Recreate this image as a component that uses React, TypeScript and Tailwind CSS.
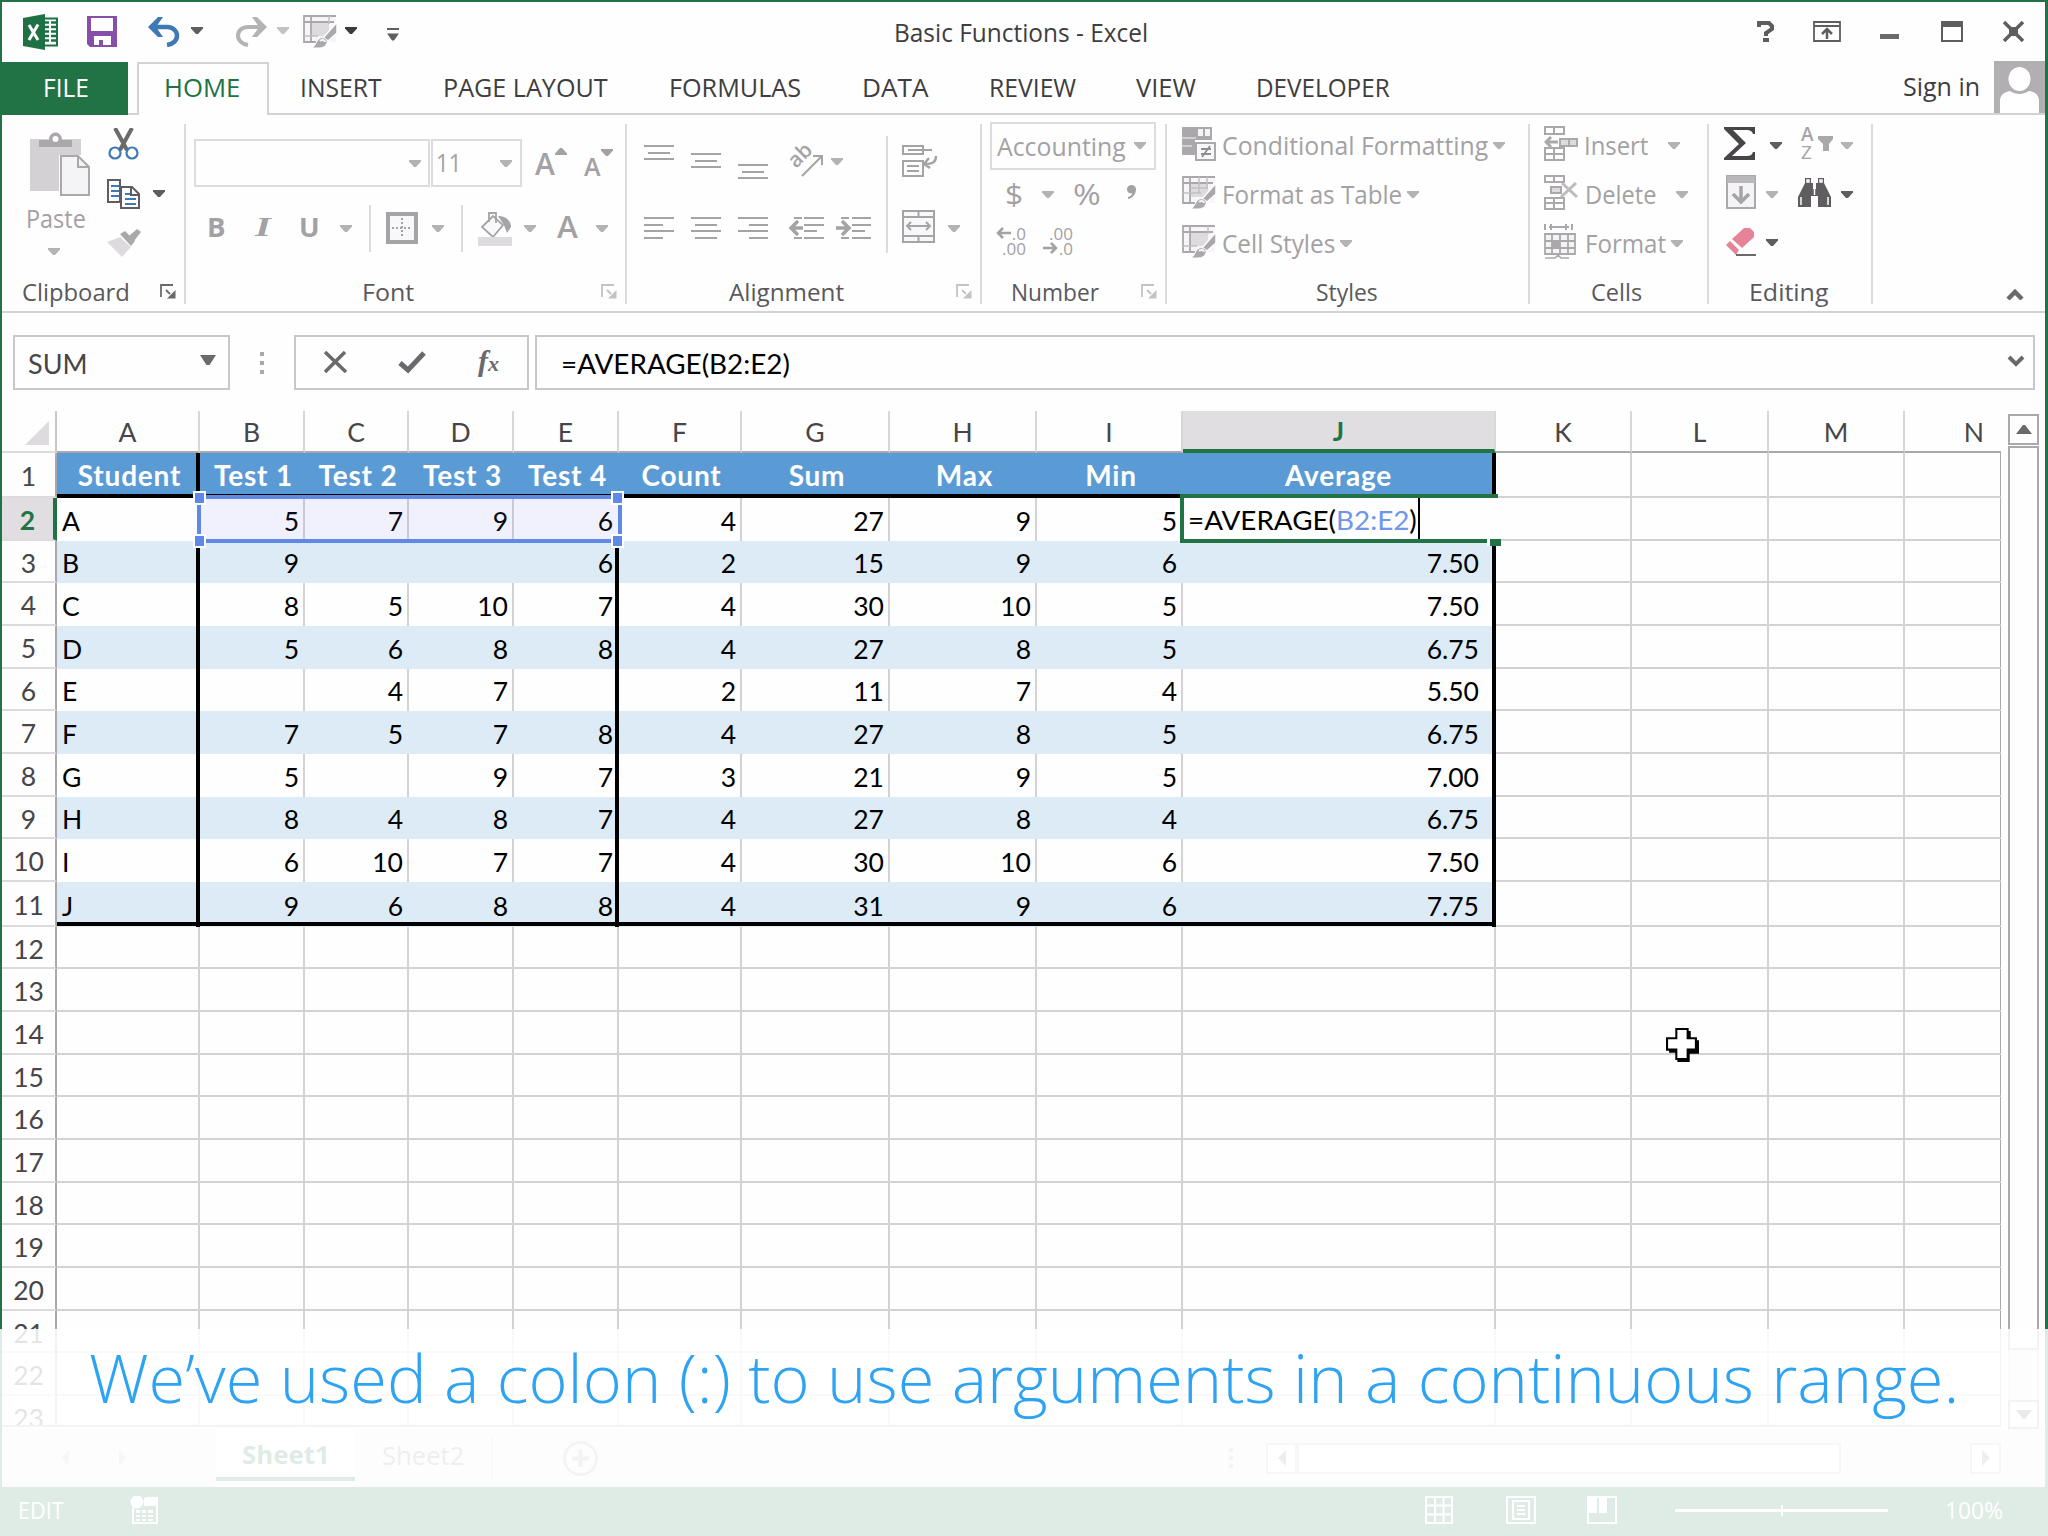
/**
 * Spreadsheet window - ribbon, formula bar, sheet grid and caption
 */

import React, { useLayoutEffect, useRef } from 'react';
import clsx from 'clsx';

/* ---------- small helpers ---------- */

interface FitProps {
  className?: string;
  children: React.ReactNode;
}

// One line of text, squeezed or stretched to the width given in className
const Fit: React.FC<FitProps> = ({ className, children }) => {
  const outer = useRef<HTMLDivElement>(null);
  const inner = useRef<HTMLSpanElement>(null);

  useLayoutEffect(() => {
    if (!outer.current || !inner.current) return;
    const ratio = outer.current.clientWidth / inner.current.offsetWidth;
    inner.current.style.transform = `scaleX(${ratio})`;
  }, []);

  return (
    <div className={clsx('shrink-0 whitespace-nowrap leading-none', className)}>
      <span ref={inner} className="inline-block origin-left">
        {children}
      </span>
      <div ref={outer} className="h-0 w-full" />
    </div>
  );
};

const Caret: React.FC<{ className?: string }> = ({ className }) => (
  <svg viewBox="0 0 12 7" className={clsx('w-[12px] h-[7px] shrink-0', className)}>
    <path d="M0 0h12v1.5L7 7H5L0 1.5z" fill="currentColor" />
  </svg>
);

const Launcher: React.FC<{ className?: string }> = ({ className }) => (
  <svg viewBox="0 0 16 15" className={clsx('w-[16px] h-[15px] shrink-0', className)}>
    <path d="M1 13V1h12M6 6l4 4" fill="none" stroke="currentColor" strokeWidth="1.8" />
    <path d="M15.500 6v8.500H7z" fill="currentColor" />
  </svg>
);

const Sep: React.FC<{ className?: string }> = ({ className }) => (
  <div className={clsx('w-[2px] shrink-0 bg-[#dcdadd]', className)} />
);

const dark = 'text-[#5f5d60]';
const dim = 'text-[#b4b2b5]';

/* ---------- title bar ---------- */

const GridBrush: React.FC<{ className?: string; variant?: 'table' | 'cell' }> = ({
  className,
  variant = 'cell',
}) => (
  <svg viewBox="0 0 34 34" className={clsx('w-[34px] h-[34px] shrink-0', className)}>
    <rect x="1" y="1" width="32" height="26" fill="#f6f5f7" />
    <rect x="8" y="8" width="18" height="13" fill="#dddbde" />
    <path d="M33 1H1v26h12M1 7h30M8 1v25" fill="none" stroke="#aaa8ab" strokeWidth="1.8" />
    {variant === 'table' && (
      <path d="M1 17h18M17 1v16M25 1v11M8 12h18" fill="none" stroke="#c2c0c3" strokeWidth="1.500" />
    )}
    {variant === 'cell' && <path d="M1 21h14M26 1v8" fill="none" stroke="#c2c0c3" strokeWidth="1.500" />}
    <path d="M34 7v11l-9 8-5-3z" fill="#aaa8ab" stroke="#fefefe" strokeWidth="1.500" />
    <path d="M9 33c4-2 4-8 8-10 4-1 8 1 7 5-1 3-4 5-8 5z" fill="#aaa8ab" stroke="#fefefe" strokeWidth="1" />
    <path d="M17 26c2-2 5-1 5 1" fill="none" stroke="#f4f3f5" strokeWidth="2" />
  </svg>
);

const TitleBar: React.FC = () => (
  <div className="flex h-[60px] items-center text-[#5f5d60]">
    <svg viewBox="0 0 36 36" className="ml-[21px] w-[36px] h-[36px]">
      <rect x="19" y="4.500" width="15" height="27" fill="#fff" stroke="#1e7145" strokeWidth="2" />
      <path
        d="M22 8.500h4M28 8.500h5M22 13h4M28 13h5M22 17.500h4M28 17.500h5M22 22h4M28 22h5M22 26.500h4M28 26.500h5"
        stroke="#1e7145"
        strokeWidth="2.500"
      />
      <path d="M0 4l22-4v36L0 32z" fill="#1e7145" />
      <path d="M6 11l9 15M15 10.500L6 26" stroke="#fff" strokeWidth="3" />
    </svg>
    <svg viewBox="0 0 30 31" className="ml-[28px] w-[30px] h-[31px]">
      <path d="M0 0h30v31H3l-3-3z" fill="#864fa8" />
      <path d="M4 2h22v13H4zM7 20h17v9h-8v-5h-4v5H7z" fill="#fff" />
    </svg>
    <svg viewBox="0 0 32 30" className="ml-[31px] w-[32px] h-[30px]">
      <path d="M3 10h16c6 0 10 4 10 8.500 0 5-4 8.500-10 9.500" fill="none" stroke="#3e78b5" strokeWidth="4.500" />
      <path d="M0 10L10 0h5L8 10l7 10h-5z" fill="#3e78b5" />
    </svg>
    <Caret className="ml-[11px] mb-[2px] w-[11px]" />
    <svg viewBox="0 0 32 30" className="ml-[32px] w-[32px] h-[30px]">
      <path d="M29 10H13C7 10 3 14 3 18.500c0 5 4 8.500 10 9.500" fill="none" stroke="#b4b2b5" strokeWidth="4" />
      <path d="M32 10L22 0h-5l7 10-7 10h5z" fill="#b4b2b5" />
    </svg>
    <Caret className="mb-[2px] ml-[10px] text-[#c4c2c5]" />
    <GridBrush className="ml-[14px]" />
    <Caret className="mb-[2px] ml-[8px] text-[#3c3a3d]" />
    <svg viewBox="0 0 12 13" className="ml-[30px] mt-[5px] w-[12px] h-[13px]">
      <path d="M0 1h12" stroke="currentColor" strokeWidth="2" />
      <path d="M0 5.500h12L7 12.500H5z" fill="currentColor" />
    </svg>
    <Fit className="ml-[495px] mt-[1px] w-[254px] text-[25px] text-[#3f3d40]">Basic Functions - Excel</Fit>
    <svg viewBox="0 0 17 21" className="ml-[609px] w-[17px] h-[21px]">
      <path d="M2 6V2h10l3 3v3l-6 4v3" fill="none" stroke="currentColor" strokeWidth="4" />
      <path d="M6 17h6v4H6z" fill="currentColor" />
    </svg>
    <svg viewBox="0 0 28 21" className="ml-[39px] w-[28px] h-[21px]">
      <path d="M1 1h26v19H1zM1 5h26" fill="none" stroke="currentColor" strokeWidth="1.800" />
      <path d="M14 18V9M9 13l5-5 5 5" fill="none" stroke="currentColor" strokeWidth="2.500" />
    </svg>
    <div className="ml-[39px] mt-[9px] h-[5px] w-[19px] bg-[#6b696c]" />
    <svg viewBox="0 0 22 21" className="ml-[42px] w-[22px] h-[21px]">
      <path d="M1 1h20v19H1z" fill="none" stroke="currentColor" strokeWidth="2" />
      <path d="M1 1h20v5H1z" fill="currentColor" />
    </svg>
    <svg viewBox="0 0 21 21" className="ml-[40px] w-[21px] h-[21px]">
      <path d="M1 1l19 19M20 1L1 20" stroke="currentColor" strokeWidth="3.500" />
      <path d="M6 6h9v9H6z" fill="currentColor" />
    </svg>
  </div>
);

/* ---------- tabs ---------- */

const Tabs: React.FC = () => (
  <div className="flex h-[53px] items-center border-b-2 border-[#d4d2d5] text-[25px] text-[#3f3d40]">
    <div className="mb-[-2px] flex h-[53px] w-[126px] items-center bg-[#217346] pb-[2px] pl-[41px] text-white">
      <Fit className="w-[46px]">FILE</Fit>
    </div>
    <div className="mb-[-2px] ml-[9px] flex h-[53px] w-[132px] items-center border-x-2 border-t-2 border-[#d4d2d5] bg-[#fefefe] pb-[4px] pl-[25px] text-[#217346]">
      <Fit className="w-[76px]">HOME</Fit>
    </div>
    <Fit className="ml-[31px] w-[82px]">INSERT</Fit>
    <Fit className="ml-[61px] w-[165px]">PAGE LAYOUT</Fit>
    <Fit className="ml-[61px] w-[132px]">FORMULAS</Fit>
    <Fit className="ml-[61px] w-[67px]">DATA</Fit>
    <Fit className="ml-[60px] w-[87px]">REVIEW</Fit>
    <Fit className="ml-[60px] w-[60px]">VIEW</Fit>
    <Fit className="ml-[60px] w-[134px]">DEVELOPER</Fit>
    <Fit className="ml-[513px] mb-[2px] w-[77px]">Sign in</Fit>
    <svg viewBox="0 0 51 52" className="ml-auto w-[51px] h-[52px]">
      <rect width="51" height="52" fill="#b1afb2" />
      <path d="M6 52V40c0-6 4-9 10-10 6 4 13 4 19 0 6 1 10 4 10 10v12z" fill="#fff" />
      <ellipse cx="25.500" cy="18" rx="11" ry="12" fill="#fff" />
    </svg>
  </div>
);

/* ---------- ribbon ---------- */

interface GroupProps {
  label: string;
  labelClass: string;
  launcherClass?: string;
  className: string;
  children: React.ReactNode;
}

const Group: React.FC<GroupProps> = ({ label, labelClass, launcherClass, className, children }) => (
  <div className={clsx('flex h-[180px] shrink-0 flex-col border-r-2 border-[#dcdadd]', className)}>
    <div className="h-[157px]">{children}</div>
    <div className="flex items-start text-[24px] text-[#5a585b]">
      <Fit className={clsx('mt-[4px]', labelClass)}>{label}</Fit>
      {launcherClass && <Launcher className={clsx('mt-[8px]', launcherClass)} />}
    </div>
  </div>
);

const Clipboard: React.FC = () => (
  <Group label="Clipboard" labelClass="ml-[20px] w-[108px]" launcherClass="ml-[30px] text-[#6b696c]" className="w-[184px]">
    <div className="flex">
      <div className="ml-[25px] mt-[8px] flex w-[64px] flex-col">
        <svg viewBox="0 0 60 64" className="ml-[3px] w-[60px] h-[64px]">
          <path d="M0 7h51v16H29v36H0z" fill="#d3d1d4" />
          <path d="M9 15V8h10c0-10 13-10 13 0h10v7z" fill="#aaa8ab" />
          <circle cx="25.500" cy="7" r="3" fill="#fff" />
          <path d="M31 24h17l11 11v28H31z" fill="#f4f3f6" stroke="#aaa8ab" strokeWidth="2" />
          <path d="M48 24v11h11" fill="none" stroke="#aaa8ab" strokeWidth="2" />
        </svg>
        <Fit className="ml-[-1px] mt-[10px] w-[60px] text-[25px] text-[#a3a1a4]">Paste</Fit>
        <Caret className={clsx('ml-[21px] mt-[17px]', dim)} />
      </div>
      <div className="ml-[16px] mt-[4px] flex flex-col">
        <svg viewBox="0 0 32 32" className="ml-[1px] w-[32px] h-[32px]">
          <path d="M7 0l12 22M24 0L12 22" stroke="#6b696c" strokeWidth="4" />
          <circle cx="7" cy="25" r="5.500" fill="none" stroke="#3e78b5" strokeWidth="2.200" />
          <circle cx="24" cy="25" r="5.500" fill="none" stroke="#3e78b5" strokeWidth="2.200" />
        </svg>
        <div className="mt-[19px] flex items-center">
          <svg viewBox="0 0 33 30" className="w-[33px] h-[30px]">
            <path d="M1 1h12v22H1z" fill="#fff" stroke="#5f5d60" strokeWidth="2" />
            <path d="M4 7h8M4 12h8M4 17h8" stroke="#3e78b5" strokeWidth="2" />
            <path d="M14 8h11l7 7v14H14z" fill="#fff" stroke="#5f5d60" strokeWidth="2" />
            <path d="M24 8v8h8" fill="none" stroke="#5f5d60" strokeWidth="2" />
            <path d="M18 15h5M18 20h11M18 25h11" stroke="#3e78b5" strokeWidth="2" />
          </svg>
          <Caret className={clsx('ml-[13px]', dark)} />
        </div>
        <svg viewBox="0 0 34 29" className="mt-[19px] w-[34px] h-[29px]">
          <path d="M0 14l13-5 11 10-9 10z" fill="#dddbde" />
          <path d="M13 6l5-3 10 10-4 5z" fill="#aaa8ab" />
          <path d="M22 8l8-7 4 3-7 9z" fill="#aaa8ab" />
        </svg>
      </div>
    </div>
  </Group>
);

const Font: React.FC = () => (
  <Group label="Font" labelClass="ml-[176px] w-[52px]" launcherClass="ml-[187px] text-[#c4c2c5]" className="w-[441px]">
    <div className={clsx('flex h-[78px] items-center pt-[1px]', dim)}>
      <div className="ml-[8px] flex h-[48px] w-[236px] items-center justify-end border-2 border-[#dddbde] pr-[7px]">
        <Caret />
      </div>
      <div className="ml-[1px] flex h-[48px] w-[91px] items-center border-2 border-[#dddbde]">
        <Fit className="mb-[2px] ml-[3px] w-[26px] text-[25px] text-[#a3a1a4]">11</Fit>
        <Caret className="ml-[38px]" />
      </div>
      <div className="ml-[13px] flex text-[#a3a1a4]">
        <Fit className="mt-[2px] w-[20px] text-[30px] font-semibold">A</Fit>
        <Caret className="mt-[1px] rotate-180 w-[10px]" />
      </div>
      <div className="ml-[17px] flex text-[#a3a1a4]">
        <Fit className="mt-[6px] w-[17px] text-[25px] font-semibold">A</Fit>
        <Caret className="mt-[1px] w-[10px]" />
      </div>
    </div>
    <div className={clsx('flex h-[54px] items-center', dim)}>
      <Fit className="mb-[4px] ml-[21px] w-[18px] text-[26px] font-bold text-[#a3a1a4]">B</Fit>
      <Fit className="mb-[4px] ml-[30px] w-[16px] font-['Liberation_Serif'] text-[28px] font-bold italic text-[#a3a1a4]">I</Fit>
      <Fit className="mb-[4px] ml-[28px] w-[21px] text-[26px] font-bold text-[#a3a1a4] underline underline-offset-4">U</Fit>
      <Caret className="ml-[20px]" />
      <Sep className="ml-[17px] h-[47px]" />
      <svg viewBox="0 0 32 32" className="ml-[15px] mb-[2px] w-[32px] h-[32px]">
        <rect x="2" y="2" width="28" height="28" fill="#f8f7f9" stroke="#a5a3a6" strokeWidth="4" />
        <path d="M16 6v20M6 16h20" stroke="#a5a3a6" strokeWidth="2" strokeDasharray="2 2" />
      </svg>
      <Caret className="ml-[14px]" />
      <Sep className="ml-[17px] h-[47px]" />
      <svg viewBox="0 0 34 34" className="ml-[15px] w-[34px] h-[34px]">
        <path d="M4 15L15 4l10 9-10 12z" fill="#f8f7f9" stroke="#a5a3a6" strokeWidth="1.800" />
        <path d="M11 10V1h7v10" fill="none" stroke="#a5a3a6" strokeWidth="1.800" />
        <path d="M20 4c8 0 13 5 13 11l-4 6-3-8z" fill="#a5a3a6" />
        <rect y="25" width="34" height="9" fill="#dddbde" />
      </svg>
      <Caret className="ml-[12px]" />
      <Fit className="mb-[3px] ml-[21px] w-[21px] text-[30px] font-semibold text-[#a3a1a4]">A</Fit>
      <Caret className="ml-[18px]" />
    </div>
  </Group>
);

// Four (or three) short rules used by all alignment buttons
const Lines: React.FC<{ d: string; className?: string }> = ({ d, className }) => (
  <svg viewBox="0 0 30 22" className={clsx('w-[30px] h-[22px] shrink-0', className)}>
    <path d={d} stroke="#a5a3a6" strokeWidth="2" />
  </svg>
);

const Alignment: React.FC = () => (
  <Group label="Alignment" labelClass="ml-[102px] w-[115px]" launcherClass="ml-[112px] text-[#c4c2c5]" className="w-[355px]">
    <div className="flex">
      <div className={clsx('flex w-[259px] flex-col', dim)}>
        <div className="flex h-[76px] items-start pt-[19px]">
          <Lines className="ml-[17px] mt-[1px]" d="M0 2h30M4 9h22M0 15h30" />
          <Lines className="ml-[17px] mt-[9px]" d="M0 2h30M4 9h22M0 15h30" />
          <Lines className="ml-[17px] mt-[20px]" d="M0 2h30M4 9h22M0 15h30" />
          <div className="grid ml-[20px] mt-[2px] h-[32px] w-[36px]">
            <span className="col-start-1 row-start-1 h-[22px] w-[25px] -rotate-45 text-[21px] font-semibold leading-[18px] text-[#a5a3a6]">
              ab
            </span>
            <svg viewBox="0 0 36 32" className="col-start-1 row-start-1 w-[36px] h-[32px]">
              <path d="M14 31L33 12M25 11h9v9" fill="none" stroke="#a5a3a6" strokeWidth="2" />
            </svg>
          </div>
          <Caret className="ml-[7px] mt-[15px]" />
        </div>
        <div className="flex items-center pt-[17px]">
          <Lines className="ml-[17px]" d="M0 1h30M0 8h19M0 14h30M0 21h19" />
          <Lines className="ml-[17px]" d="M0 1h30M4 8h22M0 14h30M4 21h22" />
          <Lines className="ml-[17px]" d="M0 1h30M11 8h19M0 14h30M11 21h19" />
          <svg viewBox="0 0 35 22" className="ml-[21px] w-[35px] h-[22px]">
            <path d="M5 1h8M15 1h20M15 8h20M15 14h13M5 21h8M15 21h20" stroke="#a5a3a6" strokeWidth="2" />
            <path d="M14 11H3M9 4l-7 7 7 7" fill="none" stroke="#a5a3a6" strokeWidth="3.500" />
          </svg>
          <svg viewBox="0 0 35 22" className="ml-[12px] w-[35px] h-[22px]">
            <path d="M5 1h8M16 1h19M16 8h19M16 14h13M5 21h8M16 21h19" stroke="#a5a3a6" strokeWidth="2" />
            <path d="M0 11h12M6 4l7 7-7 7" fill="none" stroke="#a5a3a6" strokeWidth="3.500" />
          </svg>
        </div>
      </div>
      <Sep className="mt-[12px] h-[117px]" />
      <div className="ml-[14px] mt-[21px] flex flex-col gap-[32px]">
        <svg viewBox="0 0 36 33" className="w-[36px] h-[33px]">
          <path d="M1 1h20v8H1zM6 5h24M1 16h20v15H1zM5 21h12M5 26h12" fill="none" stroke="#a5a3a6" strokeWidth="2" />
          <path d="M34 11c0 6-3 8-11 8M27 13l-5 6 6 4" fill="none" stroke="#a5a3a6" strokeWidth="2.500" />
        </svg>
        <div className="flex items-center">
          <svg viewBox="0 0 33 33" className="w-[33px] h-[33px]">
            <path d="M1 1h31v31H1zM1 7h31M1 26h31M16.500 1v6M16.500 26v6" fill="#f8f7f9" stroke="#a5a3a6" strokeWidth="2" />
            <path d="M5 16h23M9 12l-4 4 4 4M24 12l4 4-4 4" fill="none" stroke="#a5a3a6" strokeWidth="2" />
          </svg>
          <Caret className={clsx('ml-[13px] mt-[4px]', dim)} />
        </div>
      </div>
    </div>
  </Group>
);

const NumberGroup: React.FC = () => (
  <Group label="Number" labelClass="ml-[29px] w-[88px]" launcherClass="ml-[42px] text-[#c4c2c5]" className="w-[185px]">
    <div className="ml-[8px] mt-[-2px] flex h-[48px] w-[166px] items-center border-2 border-[#dddbde] text-[#a3a1a4]">
      <Fit className="ml-[5px] w-[129px] text-[26px]">Accounting</Fit>
      <Caret className={clsx('ml-[8px]', dim)} />
    </div>
    <div className={clsx('flex h-[50px] items-center', dim)}>
      <Fit className="mb-[2px] ml-[23px] w-[18px] text-[30px] text-[#a3a1a4]">$</Fit>
      <Caret className="ml-[19px]" />
      <Fit className="mb-[2px] ml-[19px] w-[28px] text-[30px] text-[#a3a1a4]">%</Fit>
      <svg viewBox="0 0 10 14" className="mb-[5px] ml-[26px] w-[10px] h-[14px]">
        <path d="M0 4a4.500 4 0 119 0c0 5-3 9-8 10v-2c3-1 4-2 4-4C2 9 0 7 0 4z" fill="#a3a1a4" />
      </svg>
    </div>
    <div className="ml-[12px] flex gap-[15px] pt-[6px] text-[17px] leading-[15px] text-[#a3a1a4]">
      <div className="flex w-[32px] flex-col items-end">
        <div className="flex items-center gap-[1px]">
          <svg viewBox="0 0 15 12" className="w-[15px] h-[12px]">
            <path d="M15 6H2M7 1L2 6l5 5" fill="none" stroke="currentColor" strokeWidth="2.500" />
          </svg>
          .0
        </div>
        <div>.00</div>
      </div>
      <div className="flex w-[32px] flex-col items-end">
        <div>.00</div>
        <div className="flex items-center gap-[1px]">
          <svg viewBox="0 0 15 12" className="w-[15px] h-[12px]">
            <path d="M0 6h13M8 1l5 5-5 5" fill="none" stroke="currentColor" strokeWidth="2.500" />
          </svg>
          .0
        </div>
      </div>
    </div>
  </Group>
);

const Styles: React.FC = () => (
  <Group label="Styles" labelClass="ml-[149px] w-[62px]" className="w-[363px]">
    <div className="flex flex-col gap-[15px] pt-[2px] pl-[15px] text-[25px] text-[#a3a1a4]">
      <div className="flex items-center">
        <svg viewBox="0 0 34 35" className="w-[34px] h-[35px]">
          <path d="M0 1h30v13H13v15H0z" fill="#aaa8ab" />
          <path d="M16 3h5v7h-5zM23 3h5v7h-5z" fill="#f4f3f5" />
          <path d="M0 12h14M0 20h10" stroke="#dddbde" strokeWidth="1.500" />
          <rect x="14" y="17" width="19" height="17" fill="#f8f7f9" stroke="#aaa8ab" strokeWidth="2" />
          <path d="M19 23h10M19 28h10M28 20l-8 11" stroke="#8f8d90" strokeWidth="1.800" />
        </svg>
        <Fit className="ml-[6px] mt-[4px] w-[266px]">Conditional Formatting</Fit>
        <Caret className={clsx('ml-[5px] mt-[4px]', dim)} />
      </div>
      <div className="flex items-center">
        <GridBrush variant="table" />
        <Fit className="ml-[6px] mt-[4px] w-[180px]">Format as Table</Fit>
        <Caret className={clsx('ml-[5px] mt-[4px]', dim)} />
      </div>
      <div className="flex items-center">
        <GridBrush />
        <Fit className="ml-[6px] mt-[4px] w-[113px]">Cell Styles</Fit>
        <Caret className={clsx('ml-[5px] mt-[4px]', dim)} />
      </div>
    </div>
  </Group>
);

const Cells: React.FC = () => (
  <Group label="Cells" labelClass="ml-[61px] w-[51px]" className="w-[179px]">
    <div className="flex flex-col gap-[14px] pt-[2px] pl-[14px] text-[25px] text-[#a3a1a4]">
      <div className="flex items-center">
        <svg viewBox="0 0 34 35" className="w-[34px] h-[35px]">
          <path d="M1 1h19v7H1zM10 1v7M1 22h19v12H1zM1 28h19M10 22v12" fill="none" stroke="#aaa8ab" strokeWidth="2" />
          <path d="M16 13h17v7H16zM25 13v7" fill="#dddbde" stroke="#aaa8ab" strokeWidth="2" />
          <path d="M14 16H2M7 11l-5 5 5 5" fill="none" stroke="#aaa8ab" strokeWidth="3" />
        </svg>
        <Fit className="ml-[6px] mt-[4px] w-[64px]">Insert</Fit>
        <Caret className={clsx('ml-[20px] mt-[4px]', dim)} />
      </div>
      <div className="flex items-center">
        <svg viewBox="0 0 34 35" className="w-[34px] h-[35px]">
          <path d="M1 1h19v6H1zM10 1v6M1 23v11h19V23zM1 28h19M10 23v11" fill="none" stroke="#aaa8ab" strokeWidth="2" />
          <path d="M7 12h10v6H7z" fill="#dddbde" stroke="#aaa8ab" strokeWidth="2" />
          <path d="M18 8l15 14M32 8L17 22" stroke="#bdbbbe" strokeWidth="3" />
        </svg>
        <Fit className="ml-[7px] mt-[5px] w-[71px]">Delete</Fit>
        <Caret className={clsx('ml-[20px] mt-[5px]', dim)} />
      </div>
      <div className="flex items-center">
        <svg viewBox="0 0 34 35" className="w-[34px] h-[35px]">
          <path d="M1 0v6M7 0v6M22 0v6M28 0v6M5 3h20" stroke="#aaa8ab" strokeWidth="2" />
          <path d="M1 10h30v20H1zM1 17h30M1 24h30M8 10v20M16 10v20M24 10v20" fill="#f4f3f6" stroke="#aaa8ab" strokeWidth="1.800" />
          <path d="M8 17h8v7H8z" fill="#aaa8ab" />
          <path d="M1 34h10l3-3 3 3h8" fill="none" stroke="#aaa8ab" strokeWidth="1.500" />
        </svg>
        <Fit className="ml-[7px] mt-[5px] w-[81px]">Format</Fit>
        <Caret className={clsx('ml-[5px] mt-[5px]', dim)} />
      </div>
    </div>
  </Group>
);

const Editing: React.FC = () => (
  <Group label="Editing" labelClass="ml-[40px] w-[79px]" className="w-[164px]">
    <div className="flex flex-col gap-[14px] pt-[2px] pl-[15px]">
      <div className="flex h-[35px] items-center">
        <svg viewBox="0 0 32 33" className="w-[32px] h-[33px]">
          <path d="M0 0h31v7h-2c-1-3-3-4-6-4H9l13 13L8 29h15c3 0 5-1 6-4h2v8H0v-2l15-14L0 2z" fill="#474548" />
        </svg>
        <Caret className={clsx('ml-[14px] mt-[4px]', dark)} />
        <div className="ml-[19px] flex w-[33px] items-center">
          <div className="flex w-[13px] flex-col text-[19px] leading-[18px] text-[#a5a3a6]">
            <span className="font-semibold">A</span>
            <span>Z</span>
          </div>
          <svg viewBox="0 0 15 15" className="ml-[4px] w-[15px] h-[15px]">
            <path d="M0 0h15v3l-4 5v7H5V8L0 3z" fill="#aaa8ab" />
          </svg>
        </div>
        <Caret className={clsx('ml-[7px] mt-[4px]', dim)} />
      </div>
      <div className="flex h-[35px] items-center">
        <svg viewBox="0 0 30 34" className="ml-[2px] w-[30px] h-[34px]">
          <path d="M1 1h28v32H1z" fill="#f4f3f6" stroke="#aaa8ab" strokeWidth="2" />
          <path d="M1 1h28v7H1z" fill="#b9b7ba" />
          <path d="M15 11v17M7 19l8 8 8-8" fill="none" stroke="#a5a3a6" strokeWidth="3.500" />
        </svg>
        <Caret className={clsx('ml-[10px] mt-[4px]', dim)} />
        <svg viewBox="0 0 33 29" className="ml-[20px] w-[33px] h-[29px]">
          <path d="M7 0h6v5h2v6h3V5h2V0h6v5l3 6 4 8v10H20V18h-7v11H0V19l4-8 3-6z" fill="#5f5d60" />
          <path d="M3 19v8M16.500 11v6M30 19v8M9 2h2v2H9zM22 2h2v2h-2z" stroke="#fff" strokeWidth="1.500" />
        </svg>
        <Caret className={clsx('ml-[10px] mt-[4px]', dark)} />
      </div>
      <div className="flex h-[34px] items-center">
        <svg viewBox="0 0 30 30" className="ml-[2px] mt-[2px] w-[30px] h-[30px]">
          <path d="M18 1h6l4 4v5L16 21l-10-9z" fill="#e68399" />
          <path d="M4 14l9 9-3 5L0 18z" fill="#e68399" />
          <path d="M10 28h20" stroke="#6b696c" strokeWidth="2" />
        </svg>
        <Caret className={clsx('ml-[10px] mt-[4px]', dark)} />
      </div>
    </div>
  </Group>
);

const Ribbon: React.FC = () => (
  <div className="flex h-[199px] border-b-2 border-[#d4d2d5] pt-[9px]">
    <Clipboard />
    <Font />
    <Alignment />
    <NumberGroup />
    <Styles />
    <Cells />
    <Editing />
    <svg viewBox="0 0 18 12" className="ml-[133px] mt-[164px] w-[18px] h-[12px]">
      <path d="M2 11l7-7 7 7" fill="none" stroke="#6b696c" strokeWidth="4.500" />
    </svg>
  </div>
);

/* ---------- formula bar ---------- */

const FormulaBar: React.FC = () => (
  <div className="flex h-[99px] items-start pt-[22px] text-[#6b696c]">
    <div className="ml-[11px] flex h-[55px] w-[217px] items-center justify-between border-2 border-[#c9c7ca] pr-[12px] pl-[13px]">
      <Fit className="mt-[2px] w-[60px] font-['Lato'] text-[27px] text-[#474548]">SUM</Fit>
      <svg viewBox="0 0 16 10" className="mb-[4px] w-[16px] h-[10px]">
        <path d="M0 0h16L9.500 10h-3z" fill="currentColor" />
      </svg>
    </div>
    <div className="ml-[30px] mt-[17px] flex w-[4px] flex-col gap-[5px]">
      <div className="h-[4px] bg-[#aaa8ab]" />
      <div className="h-[4px] bg-[#aaa8ab]" />
      <div className="h-[4px] bg-[#aaa8ab]" />
    </div>
    <div className="ml-[30px] flex h-[55px] w-[235px] items-center border-2 border-[#c9c7ca]">
      <svg viewBox="0 0 25 22" className="ml-[27px] w-[25px] h-[22px]">
        <path d="M2 1l21 20M22 1L2 21" stroke="currentColor" strokeWidth="3.500" />
      </svg>
      <svg viewBox="0 0 28 23" className="ml-[50px] w-[28px] h-[23px]">
        <path d="M2 12l8 7L26 2" fill="none" stroke="currentColor" strokeWidth="5" />
      </svg>
      <div className="mb-[2px] ml-[52px] flex font-['Liberation_Serif'] font-bold italic leading-none">
        <span className="text-[30px]">f</span>
        <span className="mt-[7px] text-[22px]">x</span>
      </div>
    </div>
    <div className="ml-[6px] flex h-[55px] w-[1500px] items-center justify-between border-2 border-[#c9c7ca] pl-[24px] pr-[8px]">
      <Fit className="mt-[2px] w-[229px] font-['Lato'] text-[27px] text-black">=AVERAGE(B2:E2)</Fit>
      <svg viewBox="0 0 18 12" className="mb-[2px] w-[18px] h-[12px]">
        <path d="M2 2l7 7 7-7" fill="none" stroke="currentColor" strokeWidth="4" />
      </svg>
    </div>
  </div>
);

/* ---------- sheet ---------- */

const columns = ['A', 'B', 'C', 'D', 'E', 'F', 'G', 'H', 'I', 'J', 'K', 'L', 'M', 'N'];

const headings = ['Student', 'Test 1', 'Test 2', 'Test 3', 'Test 4', 'Count', 'Sum', 'Max', 'Min', 'Average'];

const students = [
  ['A', '5', '7', '9', '6', '4', '27', '9', '5', ''],
  ['B', '9', '', '', '6', '2', '15', '9', '6', '7.50'],
  ['C', '8', '5', '10', '7', '4', '30', '10', '5', '7.50'],
  ['D', '5', '6', '8', '8', '4', '27', '8', '5', '6.75'],
  ['E', '', '4', '7', '', '2', '11', '7', '4', '5.50'],
  ['F', '7', '5', '7', '8', '4', '27', '8', '5', '6.75'],
  ['G', '5', '', '9', '7', '3', '21', '9', '5', '7.00'],
  ['H', '8', '4', '8', '7', '4', '27', '8', '4', '6.75'],
  ['I', '6', '10', '7', '7', '4', '30', '10', '6', '7.50'],
  ['J', '9', '6', '8', '8', '4', '31', '9', '6', '7.75'],
];

const gridCols =
  'grid grid-cols-[55px_143px_105px_104px_105px_105px_123px_148px_147px_146px_313px_136px_137px_136px_97px]';

const ColumnHeader: React.FC = () => (
  <div className={clsx(gridCols, 'h-[42px] shrink-0 leading-none')}>
    <div className="flex items-start justify-end border-b-2 border-r-2 border-b-[#dcdadd] border-r-[#c9c7ca] pr-[6px] pt-[10px]">
      <svg viewBox="0 0 24 24" className="w-[24px] h-[24px]">
        <path d="M24 0v24H0z" fill="#dddbde" />
      </svg>
    </div>
    {columns.map((c) => (
      <div
        key={c}
        className={clsx(
          'flex items-center pt-px',
          c === 'J'
            ? 'border-b-4 border-b-[#217346] bg-[#e0dee1] font-bold text-[#217346]'
            : 'border-b-2 border-b-[#aaa8ab] text-[#474548]',
          c === 'N' ? 'justify-end pr-[18px]' : 'justify-center border-r-2 border-r-[#d8d6d9]',
        )}
      >
        {c}
      </div>
    ))}
  </div>
);

interface CellProps {
  row: number;
  col: number;
}

const Cell: React.FC<CellProps> = ({ row, col }) => {
  const inTable = row <= 11 && col <= 9;
  const text = !inTable ? '' : row === 1 ? headings[col] : students[row - 2][col];
  const banded = inTable && row > 1 && row % 2 === 1;
  const thickRight = inTable && (col === 0 || col === 9 || (col === 4 && row > 1));

  return (
    <div
      className={clsx(
        'flex items-center overflow-hidden pt-[3px] leading-none',
        row === 1 && inTable && 'justify-center bg-[#5b9bd5] pl-[2px] text-[28px] font-bold tracking-[0.8px] text-white',
        row === 1 && col === 0 && 'pl-[6px]',
        banded && 'bg-[#ddebf6]',
        inTable && row > 1 && (col === 0 ? 'pl-[5px]' : 'justify-end'),
        inTable && row > 1 && col > 0 && col < 9 && (thickRight ? 'pr-[2px]' : 'pr-[4px]'),
        inTable && row > 1 && col === 9 && 'pr-[13px]',
        thickRight && (row === 2 ? 'border-r-4 border-r-transparent' : 'border-r-4 border-r-black'),
        !thickRight && !(row === 1 && inTable) && !banded && 'border-r-2',
        !thickRight && banded && 'border-r-2 border-r-[#ddebf6]',
        !thickRight && !banded && (col === 13 ? 'border-r-[#aaa8ab]' : 'border-r-[#d4d2d5]'),
        !inTable && 'border-b-2 border-b-[#d4d2d5]',
        row === 1 && inTable && 'border-b-4 border-b-black',
      )}
    >
      {text}
    </div>
  );
};

const rowHeight = (row: number) => {
  if (row === 1) return 'h-[44.5px]';
  if (row === 11) return 'h-[44.8px]';
  return 'h-[42.67px]';
};

const Row: React.FC<{ row: number }> = ({ row }) => (
  <div className={clsx(gridCols, 'shrink-0', rowHeight(row))}>
    <div
      className={clsx(
        'flex items-center justify-center border-b-2 border-b-[#dcdadd] pt-[4px] leading-none',
        row === 2
          ? 'border-r-4 border-r-[#217346] bg-[#e0dee1] font-bold text-[#217346]'
          : 'border-r-2 border-r-[#aaa8ab] text-[#474548]',
      )}
    >
      {row}
    </div>
    {columns.map((c, col) => (
      <Cell key={c} row={row} col={col} />
    ))}
  </div>
);

const Handle: React.FC<{ className: string }> = ({ className }) => (
  <div className={clsx('absolute h-[14px] w-[13px] border-2 border-white bg-[#5f89e6]', className)} />
);

// Blue outline of the cells that the formula refers to
const RangeOutline: React.FC = () => (
  <div className="absolute left-[195px] top-[84px] h-[48px] w-[425px] border-4 border-[#5f89e6] bg-[#5f6fe6]/9">
    <Handle className="left-[-8px] top-[-8px]" />
    <Handle className="right-[-6px] top-[-8px]" />
    <Handle className="bottom-[-9px] left-[-8px]" />
    <Handle className="bottom-[-9px] right-[-6px]" />
  </div>
);

const EditedCell: React.FC = () => (
  <div className="absolute left-[1178px] top-[83px] flex h-[49px] w-[318px] items-center border-y-4 border-l-4 border-[#217346] bg-[#fefefe] pl-[4px]">
    <Fit className="mt-[2px] w-[229px] text-black">
      =AVERAGE(<span className="text-[#6f95ec]">B2:E2</span>)
    </Fit>
    <div className="ml-[1px] h-full w-[2px] bg-black" />
    <div className="absolute bottom-[-7px] right-[-3px] h-[9px] w-[14px] border-l-[3px] border-t-2 border-[#fefefe] bg-[#217346]" />
  </div>
);

const Sheet: React.FC = () => (
  <div className="relative flex h-[1016px] w-[1999px] flex-col overflow-hidden border-b-2 border-[#b4b2b5] font-['Lato'] text-[26.500px]">
    <ColumnHeader />
    {Array.from({ length: 23 }, (_, i) => (
      <Row key={i} row={i + 1} />
    ))}
    {/* Bottom edge of the table */}
    <div className="absolute left-[55px] top-[511px] h-[4px] w-[1439px] bg-black" />
    <RangeOutline />
    <EditedCell />
    {/* Cross-shaped mouse pointer */}
    <svg viewBox="0 0 32 33" className="absolute left-[1664px] top-[617px] w-[33px] h-[34px]">
      <path d="M12 3h12v9h8v13h-9v8H11v-9H3V12h9z" fill="#000" />
      <path d="M10 1h11v9h8v11h-8v9H10v-9H1V10h9z" fill="#fff" stroke="#000" strokeWidth="2" />
    </svg>
  </div>
);

const VerticalScroll: React.FC = () => (
  <div className="ml-[7px] mt-[3px] flex w-[31px] flex-col">
    <div className="flex h-[31px] items-center justify-center border-2 border-[#aaa8ab]">
      <svg viewBox="0 0 16 9" className="w-[16px] h-[9px]">
        <path d="M0 9h16L9 0H7z" fill="#6b696c" />
      </svg>
    </div>
    <div className="mt-[1px] h-[904px] border-2 border-[#aaa8ab]" />
    <div className="h-[50px] border-x-2 border-[#dcdadd] bg-[#f0eef1]" />
    <div className="flex h-[29px] items-center justify-center border-2 border-[#aaa8ab]">
      <svg viewBox="0 0 16 9" className="w-[16px] h-[9px]">
        <path d="M0 0h16L9 9H7z" fill="#6b696c" />
      </svg>
    </div>
  </div>
);

/* ---------- sheet tabs and status bar ---------- */

const SheetTabs: React.FC = () => (
  <div className="flex h-[58px] items-center bg-[#f2ecf4] text-[25px] text-[#6b696c]">
    <div className="flex w-[214px] gap-[50px] self-center pl-[59px] text-[#c4c2c5]">
      <svg viewBox="0 0 8 16" className="w-[8px] h-[16px]">
        <path d="M8 0v16L0 8z" fill="currentColor" />
      </svg>
      <svg viewBox="0 0 8 16" className="w-[8px] h-[16px]">
        <path d="M0 0v16l8-8z" fill="currentColor" />
      </svg>
    </div>
    <div className="mb-auto flex h-[52px] w-[139px] items-center justify-center border-b-4 border-[#217346] bg-white text-[#217346]">
      <Fit className="mt-[2px] w-[88px] font-bold">Sheet1</Fit>
    </div>
    <Fit className="ml-[27px] mb-[5px] w-[82px] text-[#8b898c]">Sheet2</Fit>
    <Sep className="ml-[27px] h-[44px] bg-[#c4c2c5]" />
    <svg viewBox="0 0 35 35" className="ml-[70px] w-[35px] h-[35px]">
      <circle cx="17.500" cy="17.500" r="16" fill="none" stroke="#aaa8ab" strokeWidth="2.500" />
      <path d="M17.500 9v17M9 17.500h17" stroke="#aaa8ab" strokeWidth="4" />
    </svg>
    <div className="ml-[631px] flex w-[4px] flex-col gap-[4px]">
      <div className="h-[4px] bg-[#b4b2b5]" />
      <div className="h-[4px] bg-[#b4b2b5]" />
      <div className="h-[4px] bg-[#b4b2b5]" />
    </div>
    <div className="ml-[33px] flex h-[31px] w-[31px] items-center justify-center border-2 border-[#c4c2c5] bg-white">
      <svg viewBox="0 0 8 16" className="w-[8px] h-[16px]">
        <path d="M8 0v16L0 8z" fill="#8b898c" />
      </svg>
    </div>
    <div className="h-[31px] w-[544px] border-2 border-[#c4c2c5] bg-white" />
    <div className="ml-[129px] flex h-[31px] w-[31px] items-center justify-center border-2 border-[#c4c2c5] bg-white">
      <svg viewBox="0 0 8 16" className="w-[8px] h-[16px]">
        <path d="M0 0v16l8-8z" fill="#8b898c" />
      </svg>
    </div>
  </div>
);

const StatusBar: React.FC = () => (
  <div className="flex h-[49px] items-center bg-[#217346] pb-[3px] text-[24px] text-white">
    <Fit className="ml-[16px] w-[46px]">EDIT</Fit>
    <svg viewBox="0 0 28 28" className="ml-[66px] w-[28px] h-[28px]">
      <path d="M3 12v15h24V2H15" fill="none" stroke="currentColor" strokeWidth="2" />
      <path d="M14 2h13v8H14zM6 14h4v3H6zM12 14h4v3h-4zM18 14h5v3h-5zM6 19h4v2H6zM12 19h4v2h-4zM18 19h5v2h-5zM6 23h4v2H6zM12 23h4v2h-4zM18 23h5v2h-5z" fill="currentColor" />
      <circle cx="7" cy="6" r="6.500" fill="currentColor" />
    </svg>
    <svg viewBox="0 0 28 28" className="ml-[1267px] w-[28px] h-[28px]">
      <path d="M1 1h26v26H1zM1 9.500h26M1 18.500h26M10 1v26M18.500 1v26" fill="none" stroke="currentColor" strokeWidth="2" />
    </svg>
    <svg viewBox="0 0 30 28" className="ml-[53px] w-[30px] h-[28px]">
      <path d="M1 1h28v26H1zM7 5h16v18H7zM11 10h8M11 14h8M11 18h8" fill="none" stroke="currentColor" strokeWidth="2" />
    </svg>
    <svg viewBox="0 0 30 28" className="ml-[51px] w-[30px] h-[28px]">
      <path d="M1 1h28v26H1z" fill="none" stroke="currentColor" strokeWidth="2" />
      <path d="M1 1h9v16H1zM12 1h8v16h-8z" fill="currentColor" />
    </svg>
    <div className="ml-[58px] flex w-[213px] items-center">
      <div className="h-[3px] flex-1 bg-white" />
      <div className="h-[11px] w-[2px] bg-white" />
      <div className="h-[3px] flex-1 bg-white" />
    </div>
    <Fit className="ml-[57px] w-[58px]">100%</Fit>
  </div>
);

const Caption: React.FC = () => (
  <div className="absolute inset-x-0 bottom-0 h-[207px] bg-white/86 pl-[89px] pt-[15px]">
    <Fit className="w-[1870px] text-[66px] font-light text-[#2ea3f2]">
      We’ve used a colon (:) to use arguments in a continuous range.
    </Fit>
  </div>
);

const App: React.FC = () => {
  return (
    <div className="relative h-[1536px] w-[2048px] overflow-hidden bg-[#fefefe] font-['Open_Sans',sans-serif]">
      <div className="flex h-full flex-col border-l-2 border-r-[3px] border-t-2 border-[#217346]">
        <TitleBar />
        <Tabs />
        <Ribbon />
        <FormulaBar />
        <div className="flex">
          <Sheet />
          <VerticalScroll />
        </div>
        <SheetTabs />
        <StatusBar />
      </div>
      <Caption />
    </div>
  );
};

export default App;
